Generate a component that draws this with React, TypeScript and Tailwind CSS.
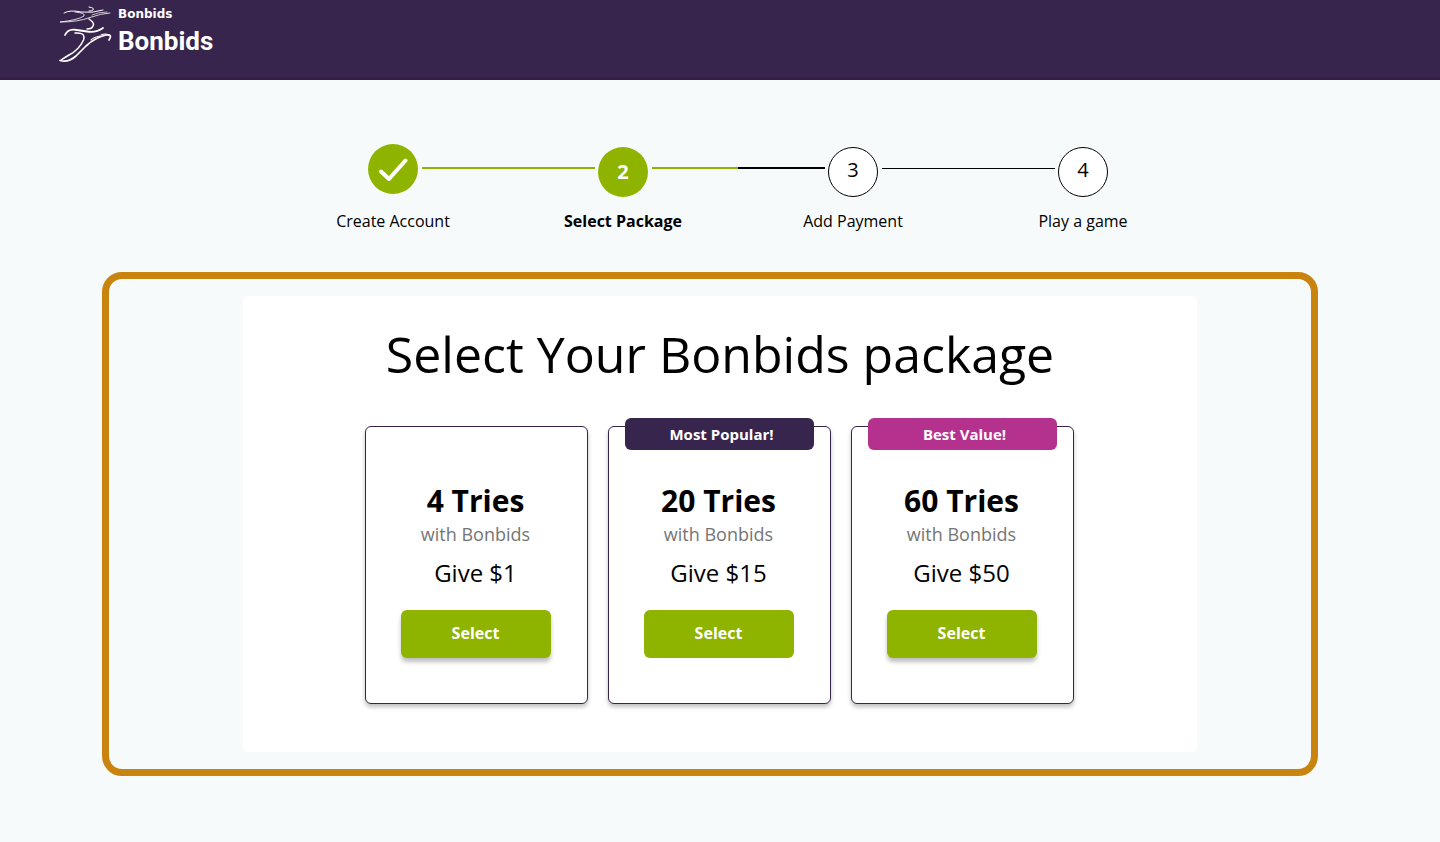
import { Fragment } from "react";
import clsx from "clsx";

type Step = { label: string; state: "done" | "current" | "next" };
type Package = {
  tries: number;
  price: number;
  badge?: { text: string; className: string };
  raised: boolean;
};

const steps: Step[] = [
  { label: "Create Account", state: "done" },
  { label: "Select Package", state: "current" },
  { label: "Add Payment", state: "next" },
  { label: "Play a game", state: "next" },
];

const connectors = [
  "mt-[23px] h-[2px] bg-[#8eb400]",
  "mt-[23px] h-[2px] bg-linear-to-r from-[#8eb400] from-50% to-black to-50%",
  "mt-6 h-px bg-black",
];

const packages: Package[] = [
  { tries: 4, price: 1, raised: true },
  { tries: 20, price: 15, badge: { text: "Most Popular!", className: "bg-[#38254d]" }, raised: false },
  { tries: 60, price: 50, badge: { text: "Best Value!", className: "bg-[#b5318e]" }, raised: true },
];

function Logo() {
  return (
    <a href="#" aria-label="Bonbids" className="flex gap-[6px] text-white">
      <svg width="54" height="58" viewBox="0 0 54 58" fill="none" stroke="currentColor" strokeLinecap="round" aria-hidden="true">
        <path d="M31 1 Q37 2 35 4 Q34 5 31 5" strokeWidth="1" />
        <path d="M6 7 Q12 3.5 23 6 Q34 7.5 45 4" strokeWidth="1" />
        <path d="M17 6 Q28 7 26 10 Q20 14 2 16 Q20 16 32 11.5 Q43 7.5 52 7" strokeWidth="0.8" />
        <path d="M34 9 Q40 6 49 6" strokeWidth="0.7" />
        <path d="M31 13 Q37 17 35 20 Q34 23 29 23" strokeWidth="1.5" />
        <path d="M7 29 Q10 22 19 24 L29 25.5 Q38 27 45 22" strokeWidth="1.8" />
        <path d="M17 27 Q28 26 25.5 34 Q21 44 11 49 Q6 52 3 54" strokeWidth="1.5" />
        <path d="M2 54.5 Q10 57 18 50 L28 40 Q38 31 48 29 Q55 28 51 34" strokeWidth="1.7" />
        <path d="M33 34 Q36 31 42 30 M43 29 Q47 27 51 29" strokeWidth="1.1" />
      </svg>
      <span className="flex flex-col">
        <span aria-hidden="true" className="h-4 font-['DejaVu_Sans',sans-serif] text-[12px] font-bold leading-4">
          Bonbids
        </span>
        <span className="mt-[3px] font-[Roboto,sans-serif] text-[26px] font-bold leading-8">Bonbids</span>
      </span>
    </a>
  );
}

function StepMarker({ step, number }: { step: Step; number: number }) {
  if (step.state === "done") {
    return (
      <span className="mb-[3px] flex size-[50px] items-center justify-center rounded-full bg-[#8eb400] text-white">
        <svg width="30" height="24" viewBox="0 0 30 24" fill="none" stroke="currentColor" strokeWidth="4" strokeLinecap="round" strokeLinejoin="round" aria-hidden="true">
          <path d="M3 14.5 L11 22 L27.5 3.5" />
        </svg>
      </span>
    );
  }
  return (
    <span
      className={clsx(
        "mt-[3px] flex size-[50px] items-center justify-center rounded-full text-xl",
        step.state === "current" ? "bg-[#8eb400] font-bold text-white" : "border border-black bg-white pb-[4px]",
      )}
    >
      {number}
    </span>
  );
}

function Stepper() {
  return (
    <ol className="mx-auto flex max-w-[776px] pl-9">
      {steps.map((step, i) => (
        <Fragment key={step.label}>
          <li
            aria-current={step.state === "current" ? "step" : undefined}
            className="flex w-[50px] shrink-0 flex-col items-center"
          >
            <StepMarker step={step} number={i + 1} />
            <span className={clsx("mt-3 whitespace-nowrap text-base", step.state === "current" && "font-bold")}>
              {step.label}
            </span>
          </li>
          {i < connectors.length && (
            <li aria-hidden="true" className={clsx("mr-[3px] ml-1 flex-1", connectors[i])} />
          )}
        </Fragment>
      ))}
    </ol>
  );
}

function PackageCard({ tries, price, badge, raised }: Package) {
  return (
    <article className="relative flex flex-1 flex-col items-center rounded-md border border-[#38254d] bg-white pt-[54px] pr-[2px] pb-[45px] shadow-[0_3px_4px_rgba(0,0,0,0.25)]">
      {badge && (
        <p
          className={clsx(
            "absolute inset-x-[16px] -top-[9px] rounded-md pl-1 text-center text-[15px] font-bold leading-8 text-white",
            badge.className,
          )}
        >
          {badge.text}
        </p>
      )}
      <h2 className="text-[30px] font-bold leading-10">{tries} Tries</h2>
      <p className="mt-px text-lg leading-6 text-[#757575]">with Bonbids</p>
      <p className="mt-[7px] text-2xl leading-10">Give ${price}</p>
      <button
        type="button"
        aria-label={`Select ${tries} tries`}
        className={clsx(
          "mt-[17px] h-12 w-[150px] rounded-md bg-[#8eb400] pb-[2px] text-base font-bold text-white",
          raised && "shadow-[0_4px_4px_rgba(0,0,0,0.25)]",
        )}
      >
        Select
      </button>
    </article>
  );
}

export default function App() {
  return (
    <div className="min-h-screen bg-[#f6fafb] font-['Open_Sans',sans-serif] text-black">
      <header className="h-20 border-b-2 border-[#351d48] bg-[#38254d] pt-[6px] pl-[58px]">
        <Logo />
      </header>
      <main className="pt-16 pb-16">
        <Stepper />
        <section className="mt-[39px] mr-[122px] ml-[102px] rounded-[20px] border-[7px] border-[#c98410] pt-[17px] pr-[114px] pb-[17px] pl-[134px]">
          <div className="rounded-md bg-white pt-[23px] pb-12">
            <h1 className="text-center text-[50px] leading-[70px]">Select Your Bonbids package</h1>
            <div className="mt-[37px] flex gap-5 pr-[123px] pl-[122px]">
              {packages.map((p) => (
                <PackageCard key={p.tries} {...p} />
              ))}
            </div>
          </div>
        </section>
      </main>
    </div>
  );
}
